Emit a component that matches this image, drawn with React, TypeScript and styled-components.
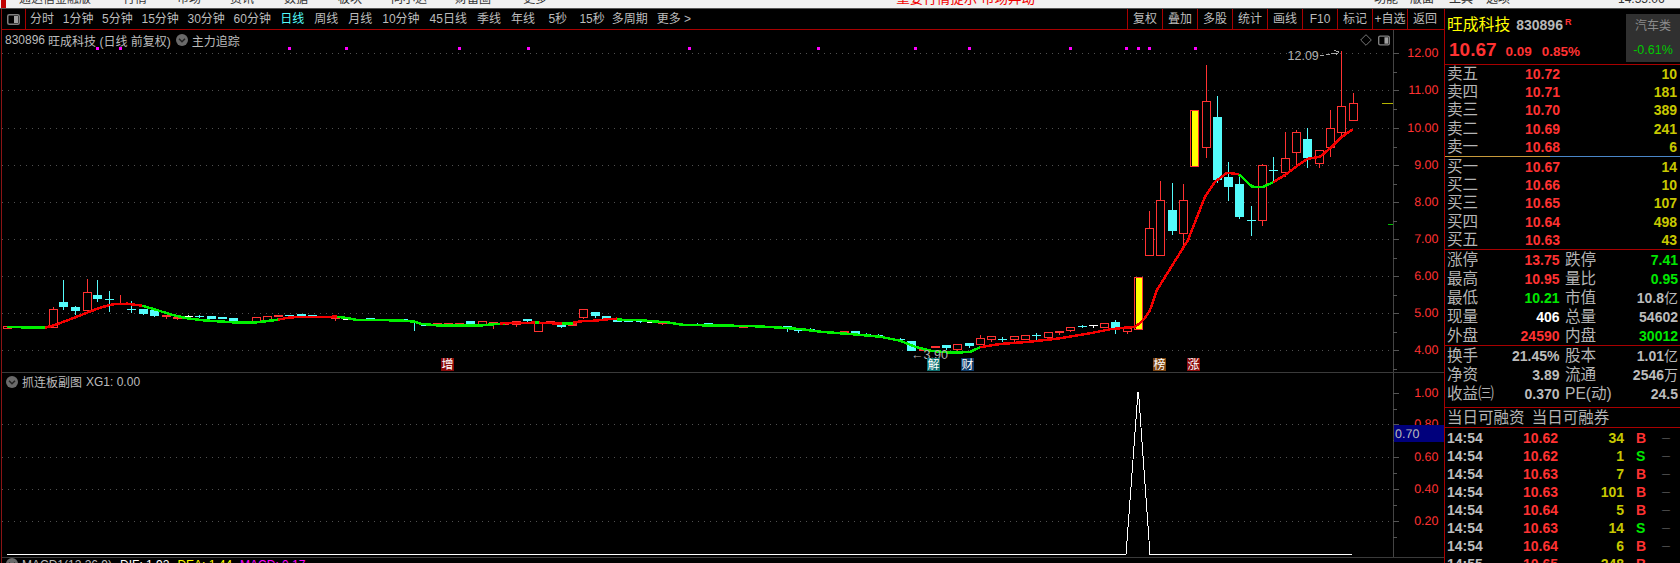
import React from "react";
import styled, { createGlobalStyle } from "styled-components";

const SANS = `"Liberation Sans", "Noto Sans CJK SC", sans-serif`;
const RED = "#ff3232";
const GREEN = "#00e800";
const GREY = "#bcbcbc";
const YELLOW = "#c8c800";
const CYAN = "#54fcfc";
const RULE = "#a80000";

const Global = createGlobalStyle`
  html, body { margin: 0; padding: 0; background: #000; }
  * { box-sizing: border-box; }
`;

const Page = styled.div`
  width: 1680px; height: 563px; overflow: hidden; background: #000;
  display: flex; flex-direction: column; font-family: ${SANS}; color: ${GREY};
`;
const MenuStrip = styled.div`
  height: 9px; flex: none; background: #f0f0f0; border-bottom: 1px solid #555;
  display: flex; align-items: flex-end; overflow: hidden; position: relative; padding-bottom: 2px;
`;
const MenuLogo = styled.span`
  width: 5px; height: 8px; background: #c00000; flex: none; margin: 0 0 -2px 1px;
`;
const MenuItem = styled.span<{ $ml: number; $red?: boolean }>`
  margin-left: ${(p) => p.$ml}px; flex: none; font-size: ${(p) => (p.$red ? 13.5 : 12)}px; line-height: 14px; white-space: nowrap;
  color: ${(p) => (p.$red ? "#f00000" : "#333")};
`;
const Body = styled.div`display: flex; height: 554px; flex: none;`;
const Main = styled.div`
  width: 1444px; padding-left: 1px; flex: none; display: flex; flex-direction: column;
`;
const MainInner = styled.div`
  border-left: 1px solid #8a1414; width: 1443px; height: 100%; display: flex; flex-direction: column;
`;
const Toolbar = styled.div`
  height: 21px; flex: none; display: flex; align-items: stretch; border-bottom: 1px solid ${RULE};
`;
const ToolIcon = styled.div`
  width: 24px; border-right: 1px solid ${RULE}; display: flex; align-items: center; justify-content: center;
`;
const Tabs = styled.div`display: flex; align-items: center; padding-left: 4px; flex: 1;`;
const TabGroup = styled.div<{ $gap: number; $ml?: number }>`
  display: flex; align-items: center; gap: ${(p) => p.$gap}px; margin-left: ${(p) => p.$ml ?? 0}px;
`;
const Tab = styled.span<{ $on?: boolean; $ml?: number }>`
  font-size: 12px; line-height: 20px; white-space: nowrap; margin-left: ${(p) => p.$ml ?? 0}px;
  color: ${(p) => (p.$on ? CYAN : GREY)};
`;
const ToolButtons = styled.div`display: flex; flex: none; padding-right: 2px;`;
const ToolButton = styled.div`
  width: 35px; border-left: 1px solid ${RULE}; font-size: 12px; line-height: 20px; text-align: center; white-space: nowrap;
`;
const PaneHeader = styled.div<{ $h: number }>`
  height: ${(p) => p.$h}px; width: 1392px; flex: none; display: flex; align-items: center;
  padding-left: 3px; border-right: 1px solid #444; font-size: 12px; color: ${GREY}; white-space: nowrap;
`;
const KlineHeader = styled(PaneHeader)`padding-top: 3px;`;
const HeaderRight = styled.div`margin-left: auto; display: flex; align-items: center; gap: 6px; padding-right: 3px;`;
const CodeText = styled.span`margin-right: 3px;`;
const ChevronWrap = styled.span`display: inline-flex; margin: 0 4px 0 5px;`;
const SubChevron = styled.span`display: inline-flex; margin: 0 4px 0 1px;`;
const Gap = styled.span`margin-left: 4px;`;
const ChartSvg = styled.svg`display: block; flex: none; overflow: visible;`;
const Rule = styled.div`height: 1px; flex: none; background: #3a3a3a;`;
const MacdRow = styled(PaneHeader)`border-right: none; width: auto; align-items: flex-start; padding-top: 0;`;
const MacdPart = styled.span<{ $c: string; $ml: number }>`color: ${(p) => p.$c}; margin-left: ${(p) => p.$ml}px;`;

const AxisLabel = styled.text`
  fill: ${RED}; font-family: ${SANS}; font-size: 12.5px; text-anchor: end; dominant-baseline: central;
`;
const ChartNote = styled.text`fill: #b0b0b0; font-family: ${SANS}; font-size: 12.5px; dominant-baseline: central;`;
const BadgeText = styled.text`
  fill: #fff; font-family: ${SANS}; font-size: 12px; text-anchor: middle; dominant-baseline: central;
`;
const BlueLabel = styled.text`fill: ${GREY}; font-family: ${SANS}; font-size: 12.5px; dominant-baseline: central;`;

const Side = styled.aside`
  width: 236px; flex: none; border-left: 1px solid ${RULE}; display: flex; flex-direction: column; overflow: hidden;
`;
const Quote = styled.div`
  height: 56px; flex: none; display: flex; border-bottom: 1px solid ${RULE};
`;
const QuoteInfo = styled.div`flex: 1; padding-left: 2px; display: flex; flex-direction: column;`;
const NameRow = styled.div`display: flex; align-items: center; height: 24px; margin-top: 4px;`;
const StockName = styled.span`color: #ffff00; font-size: 15.8px; line-height: 24px;`;
const StockCode = styled.span`font-weight: 700; font-size: 14px; margin-left: 6px; color: #b8b8b8;`;
const StockFlag = styled.span`color: ${RED}; font-weight: 700; font-size: 9px; margin: -6px 0 0 2px;`;
const PriceRow = styled.div`display: flex; align-items: baseline; height: 26px;`;
const LastPrice = styled.span`color: ${RED}; font-weight: 700; font-size: 19px; line-height: 26px; margin-left: 2px;`;
const Change = styled.span<{ $ml: number }>`color: ${RED}; font-weight: 700; font-size: 13.5px; margin-left: ${(p) => p.$ml}px;`;
const Sector = styled.div`
  width: 54px; height: 48px; margin-top: 5px; background: #303030; display: flex; flex-direction: column;
  align-items: center; flex: none;
`;
const SectorName = styled.span`color: #8c8c8c; font-size: 12px; line-height: 14px; margin-top: 5px;`;
const SectorChange = styled.span`color: #00c800; font-size: 12.5px; line-height: 14px; margin-top: 10px;`;

const Book = styled.div`flex: none;`;
const BidBook = styled(Book)`padding-top: 1px; border-bottom: 1px solid ${RULE}; height: 93px;`;
const AskBook = styled(Book)`height: 91px;`;
const Split = styled.div`
  height: 1px; flex: none; background: linear-gradient(90deg, #c89a3c 0 105px, #4a86c8 105px 100%);
`;
const BookRow = styled.div`
  height: 18.2px; display: grid; grid-template-columns: 78px 35px 1fr; padding: 0 3px 0 2px; align-items: center;
`;
const Label = styled.span`font-size: 15.6px; line-height: 18px; color: #b4b4b4; white-space: nowrap;`;
const Num = styled.span<{ $c: string; $right?: boolean }>`
  font-weight: 700; font-size: 14px; line-height: 18px; color: ${(p) => p.$c}; white-space: nowrap;
  text-align: ${(p) => (p.$right ? "right" : "left")};
`;
const StatsBlock = styled.div<{ $pb?: number }>`
  flex: none; border-bottom: 1px solid ${RULE}; padding: 0 0 ${(p) => p.$pb ?? 0}px 2px;
`;
const StatRow = styled.div<{ $h: number }>`height: ${(p) => p.$h}px; display: flex;`;
const Stat = styled.div<{ $w: number; $mr?: number }>`
  width: ${(p) => p.$w}px; margin-right: ${(p) => p.$mr ?? 0}px; display: flex; justify-content: space-between; align-items: center;
`;
const Unit = styled.span`font-weight: 400;`;
const Margin = styled.div`
  height: 20px; flex: none; border-bottom: 1px solid ${RULE}; padding-left: 2px; font-size: 15.5px; line-height: 19px;
  color: #b4b4b4; word-spacing: 3px; white-space: nowrap;
`;
const Ticks = styled.div`padding-top: 1px; flex: none;`;
const TickRow = styled.div`
  height: 18px; display: grid; grid-template-columns: 76px 35px 66px 38px 1fr; padding-left: 2px; align-items: center;
`;
const TickSide = styled(Num)`padding-left: 12px;`;
const TickDash = styled.span`font-size: 8px; color: #808080; line-height: 18px;`;

/* chart data: x, body top, body bottom, high, low, kind */
type Kind = "r" | "R" | "c" | "x" | "w" | "y";
type Candle = [number, number, number, number | null, number | null, Kind];
const candles: Candle[] = [
  [7, 326, 328, null, null, "r"], [18, 327, 328, null, null, "R"], [41, 326, 328, null, null, "R"],
  [53, 309, 327, 307, null, "r"], [63, 302, 307, 280, 310, "c"], [75, 307, 311, 306, 315, "c"],
  [87, 292, 310, 279, null, "r"], [97, 295, 299, 280, 302, "c"], [109, 299, 299, 291, 312, "x"],
  [120, 303, 304, 295, null, "R"], [131, 309, 309, 301, 313, "x"], [143, 309, 314, null, 315, "c"],
  [154, 310, 316, null, 317, "c"], [166, 315, 317, null, 319, "R"], [177, 317, 319, null, 320, "R"],
  [188, 316, 316, 315, 318, "w"], [199, 316, 316, 315, 318, "x"], [211, 316, 319, null, null, "c"],
  [222, 317, 319, null, null, "c"], [233, 318, 321, null, null, "c"], [245, 321, 322, null, null, "R"],
  [256, 317, 322, null, null, "r"], [267, 316, 320, null, null, "r"], [278, 315, 317, null, null, "R"],
  [289, 315, 316, null, null, "c"], [301, 314, 316, null, null, "c"], [312, 315, 316, null, null, "c"],
  [335, 318, 319, null, 321, "R"], [347, 319, 319, null, null, "w"],
  [370, 318, 319, null, null, "c"], [392, 319, 320, null, null, "c"], [403, 319, 321, null, null, "c"],
  [414, 322, 323, null, 331, "c"], [425, 325, 326, null, null, "c"], [437, 323, 325, null, null, "r"],
  [448, 323, 325, null, null, "r"], [459, 323, 325, null, null, "R"], [470, 321, 324, null, 325, "c"],
  [482, 321, 324, null, null, "r"], [493, 322, 325, null, 329, "R"], [504, 322, 325, null, null, "R"],
  [516, 321, 325, null, 327, "R"], [527, 319, 321, null, 322, "c"], [538, 322, 331, null, null, "r"],
  [550, 321, 324, null, null, "R"], [561, 322, 327, null, 328, "c"], [572, 322, 326, null, null, "R"],
  [583, 309, 317, null, 319, "r"], [595, 312, 316, null, 318, "c"], [606, 316, 319, null, null, "c"],
  [617, 319, 322, null, null, "c"], [628, 321, 322, null, null, "c"], [640, 321, 322, null, 323, "c"],
  [651, 322, 323, null, null, "w"], [662, 323, 324, null, 325, "R"], [697, 324, 325, 323, null, "c"],
  [708, 323, 325, null, null, "c"], [719, 324, 325, null, null, "c"], [743, 327, 328, null, null, "R"],
  [755, 325, 326, null, null, "w"], [787, 326, 329, null, 332, "c"], [798, 330, 330, 328, 333, "x"],
  [810, 329, 331, 328, null, "c"], [832, 332, 333, null, null, "c"], [844, 331, 333, null, null, "R"],
  [855, 331, 334, null, null, "c"], [866, 334, 335, 333, null, "c"], [878, 335, 337, 334, null, "c"],
  [900, 339, 339, 338, 341, "x"], [911, 341, 351, null, null, "c"], [923, 349, 351, null, null, "R"],
  [935, 346, 348, null, null, "R"], [946, 345, 348, null, 350, "c"], [957, 344, 349, null, 352, "r"],
  [969, 343, 346, null, 348, "c"], [980, 338, 344, 335, null, "r"], [991, 336, 339, null, 342, "r"],
  [1002, 339, 339, 337, 342, "x"], [1014, 336, 339, null, 342, "r"], [1025, 335, 339, null, null, "r"],
  [1036, 335, 335, 333, 340, "x"], [1048, 332, 337, null, null, "r"], [1059, 331, 333, null, 335, "R"],
  [1070, 327, 330, null, 332, "r"], [1082, 326, 326, 325, 328, "x"], [1093, 325, 325, null, 328, "w"],
  [1104, 323, 327, null, null, "r"], [1115, 322, 328, 320, 334, "c"], [1127, 328, 331, null, 334, "r"],
  [1138, 277, 329, null, null, "y"], [1149, 228, 255, 211, null, "r"], [1160, 200, 255, 181, null, "r"],
  [1172, 210, 231, 183, 235, "c"], [1183, 200, 233, 184, 245, "r"], [1194, 110, 166, null, 167, "y"],
  [1206, 101, 147, 65, 158, "r"], [1217, 117, 180, 96, 183, "c"], [1228, 177, 187, 162, 201, "c"],
  [1239, 184, 217, 175, 219, "c"], [1251, 220, 220, 206, 236, "x"], [1262, 165, 220, 164, 226, "r"],
  [1273, 170, 170, 157, 182, "x"], [1285, 158, 172, 132, 177, "r"], [1296, 132, 152, 130, 167, "r"],
  [1307, 139, 158, 128, 168, "c"], [1319, 150, 163, null, 168, "r"], [1330, 128, 147, 110, 157, "r"],
  [1341, 106, 132, 51, 138, "r"], [1353, 103, 120, 93, null, "r"],
];

type Seg = [string, number[][]];
const LG = "#00f000";
const LR = "#f40000";
const maSegments: Seg[] = [
  [LG, [[7, 327], [45, 327.7]]],
  [LR, [[45, 327.7], [55, 325], [70, 319.3], [83, 314.3], [100, 307.7], [113, 304.3], [127, 303.7], [142, 305.7]]],
  [LG, [[142, 305.7], [157, 310], [170, 314.3], [187, 318.3], [203, 320.3], [233, 322.3], [257, 322.3], [278, 319.7]]],
  [LR, [[278, 319.7], [290, 317.3], [337, 316.7]]],
  [LG, [[337, 316.7], [350, 318.5], [357, 320], [380, 320], [403, 320.7], [415, 321.7], [420, 323.7], [437, 325.3], [482, 325.3], [493, 324.3], [505, 323.7]]],
  [LR, [[500, 323.3], [535, 322.7]]],
  [LG, [[535, 322.7], [539, 322.7]]],
  [LR, [[539, 322.7], [562, 323.7]]],
  [LG, [[562, 323.7], [573, 323.7]]],
  [LR, [[573, 322.7], [583, 321], [595, 320.7], [607, 319.3], [617, 318.7]]],
  [LG, [[617, 319.7], [640, 320], [652, 321.3], [668, 322.3], [675, 323.7], [685, 325], [750, 326], [775, 327.3], [800, 329], [820, 331.7], [850, 334], [880, 336.7], [900, 340.7], [915, 346.7], [930, 350.7], [950, 352.7], [970, 352], [980, 347.3]]],
  [LR, [[980, 347.3], [1000, 344], [1030, 341.7], [1060, 338.3], [1090, 333.3], [1110, 329.3], [1125, 327.7], [1135, 326.7], [1140, 323], [1145, 318], [1150, 310], [1157, 290], [1165, 277], [1188, 240], [1205, 196.7], [1215, 181.7], [1227, 172.7], [1239, 174.3]]],
  [LG, [[1239, 174.3], [1252, 186.7], [1263, 187], [1273, 182.3]]],
  [LR, [[1273, 182.3], [1285, 175], [1297, 166], [1307, 159], [1320, 156.7], [1330, 148.3], [1342, 136.7], [1353, 129.3]]],
];

const priceLevels = [12, 11, 10, 9, 8, 7, 6, 5, 4];
const levelY = (p: number) => Math.round(53.3 + (12 - p) * 37.12);
const purple = [96, 119, 288, 345, 458, 527, 688, 817, 914, 968, 1069, 1125, 1137, 1148, 1194];
const badges: [number, string, string][] = [
  [441, "增", "#8a0a0a"], [927, "解", "#0c7272"], [961, "财", "#0c3a68"], [1153, "榜", "#7c4410"], [1187, "涨", "#8a0a0a"],
];
const subLevels: [number, string][] = [[393, "1.00"], [424, "0.80"], [457, "0.60"], [489, "0.40"], [521, "0.20"]];

const CandleMark = ({ c }: { c: Candle }) => {
  const [x, top, bottom, high, low, kind] = c;
  const colour = kind === "c" || kind === "x" ? CYAN : kind === "w" ? "#fff" : RED;
  const wx = x + 0.5;
  const wick = (a: number, b: number) => <line x1={wx} x2={wx} y1={a} y2={b} stroke={colour} />;
  return (
    <g>
      {high !== null && wick(high, top)}
      {low !== null && wick(bottom, low)}
      {kind === "r" && <rect x={x - 4 + 0.5} y={top + 0.5} width={8} height={bottom - top} fill="#000" stroke={RED} />}
      {kind === "R" && <rect x={x - 4} y={top} width={9} height={Math.max(bottom - top, 1)} fill={RED} />}
      {kind === "c" && <rect x={x - 4} y={top} width={9} height={Math.max(bottom - top, 1)} fill={CYAN} />}
      {(kind === "x" || kind === "w") && <rect x={x - 4} y={top} width={9} height={1} fill={colour} />}
      {kind === "y" && (
        <>
          <rect x={x - 4 + 0.5} y={top + 0.5} width={8} height={bottom - top} fill="#000" stroke={RED} />
          <rect x={x - 2} y={top + 1} width={6} height={bottom - top - 1} fill="#ffff00" />
        </>
      )}
    </g>
  );
};

const CircleChevron = () => (
  <svg width="12" height="12" viewBox="0 0 12 12">
    <circle cx="6" cy="6" r="6" fill="#6a6a6a" />
    <path d="M3 4.8 6 7.8 9 4.8" fill="none" stroke="#222" strokeWidth="1.5" />
  </svg>
);
const PanelGlyph = ({ w, h }: { w: number; h: number }) => (
  <svg width={w} height={h} viewBox="0 0 13 11">
    <rect x="0.75" y="0.75" width="11.5" height="9.5" rx="1.5" fill="none" stroke="#808080" strokeWidth="1.5" />
    <rect x="7" y="2" width="4" height="7" fill="#a0a0a0" />
  </svg>
);

const Kline = () => (
  <ChartSvg width={1442} height={325} viewBox="2 47 1442 325" shapeRendering="crispEdges">
    {priceLevels.map((p) => (
      <line key={p} x1={2} x2={1393} y1={levelY(p) + 0.5} y2={levelY(p) + 0.5} stroke="#505050" strokeDasharray="1 5" />
    ))}
    <line x1={1393.5} x2={1393.5} y1={47} y2={372} stroke="#444" />
    {priceLevels.map((p) => (
      <g key={p}>
        <line x1={1393} x2={1399} y1={levelY(p) + 0.5} y2={levelY(p) + 0.5} stroke="#555" />
        <line x1={1393} x2={1397} y1={levelY(p) + 19} y2={levelY(p) + 19} stroke="#555" />
        <AxisLabel x={1438.5} y={levelY(p)} textRendering="geometricPrecision">{p.toFixed(2)}</AxisLabel>
      </g>
    ))}
    <line x1={1382} x2={1393} y1={103.5} y2={103.5} stroke="#b4b400" />
    <line x1={1388} x2={1393} y1={224.5} y2={224.5} stroke="#00c000" />
    {purple.map((x) => <rect key={x} x={x} y={47} width={3} height={3} fill="#ff00ff" />)}
    {candles.map((c) => <CandleMark key={c[0]} c={c} />)}
    {maSegments.map(([col, pts], i) => (
      <polyline key={i} points={pts.map((p) => p.join(",")).join(" ")} fill="none" stroke={col} strokeWidth={2.5} />
    ))}
    <ChartNote x={1287.5} y={55.5}>12.09</ChartNote>
    <path d="M1320 55.5h4M1326 54.5h4M1331 53.5h7M1334 50.5l5 1.5-3 3" fill="none" stroke="#a8a8a8" />
    <ChartNote x={911} y={355}>←3.90</ChartNote>
    {badges.map(([x, t, col]) => (
      <g key={t}>
        <rect x={x} y={358} width={13} height={13} fill={col} />
        <BadgeText x={x + 6.5} y={364.5}>{t}</BadgeText>
      </g>
    ))}
  </ChartSvg>
);

const SubChart = () => (
  <ChartSvg width={1442} height={167} viewBox="2 390 1442 167" shapeRendering="crispEdges">
    {subLevels.slice(1).map(([y]) => (
      <line key={y} x1={2} x2={1393} y1={y + 0.5} y2={y + 0.5} stroke="#505050" strokeDasharray="1 5" />
    ))}
    <line x1={1393.5} x2={1393.5} y1={390} y2={557} stroke="#444" />
    {subLevels.map(([y, t]) => (
      <g key={t}>
        <line x1={1393} x2={1399} y1={y + 0.5} y2={y + 0.5} stroke="#555" />
        <line x1={1393} x2={1397} y1={y + 16.5} y2={y + 16.5} stroke="#555" />
        <AxisLabel x={1438.5} y={y} textRendering="geometricPrecision">{t}</AxisLabel>
      </g>
    ))}
    <rect x={1394} y={425} width={50} height={17} fill="#00007c" />
    <BlueLabel x={1395} y={433.5} textRendering="geometricPrecision">0.70</BlueLabel>
    <polyline points="7,554.5 1126,554.5 1138,392 1138.5,392 1150,554.5 1352,554.5" fill="none" stroke="#fff" />
  </ChartSvg>
);

const intradayTabs = ["分时", "1分钟", "5分钟", "15分钟", "30分钟", "60分钟"];
const periodTabs = ["日线", "周线", "月线", "10分钟", "45日线", "季线", "年线"];
const tools = ["复权", "叠加", "多股", "统计", "画线", "F10", "标记", "+自选", "返回"];
const asks: [string, string, string][] = [["卖五", "10.72", "10"], ["卖四", "10.71", "181"], ["卖三", "10.70", "389"], ["卖二", "10.69", "241"], ["卖一", "10.68", "6"]];
const bids: [string, string, string][] = [["买一", "10.67", "14"], ["买二", "10.66", "10"], ["买三", "10.65", "107"], ["买四", "10.64", "498"], ["买五", "10.63", "43"]];
const WHITE = "#ffffff";
const stats: [string, string, string, string, string, string, string?][] = [
  ["涨停", "13.75", RED, "跌停", "7.41", GREEN],
  ["最高", "10.95", RED, "量比", "0.95", GREEN],
  ["最低", "10.21", GREEN, "市值", "10.8", GREY, "亿"],
  ["现量", "406", WHITE, "总量", "54602", GREY],
  ["外盘", "24590", RED, "内盘", "30012", GREEN],
];
const fundamentals: [string, string, string, string, string][] = [
  ["换手", "21.45%", "股本", "1.01", "亿"],
  ["净资", "3.89", "流通", "2546", "万"],
  ["收益㈢", "0.370", "PE(动)", "24.5", ""],
];
const ticks: [string, string, string, string][] = [
  ["14:54", "10.62", "34", "B"], ["14:54", "10.62", "1", "S"], ["14:54", "10.63", "7", "B"], ["14:54", "10.63", "101", "B"],
  ["14:54", "10.64", "5", "B"], ["14:54", "10.63", "14", "S"], ["14:54", "10.64", "6", "B"], ["14:55", "10.65", "248", "B"],
];

const BookRows = ({ rows }: { rows: [string, string, string][] }) => (
  <>
    {rows.map(([l, p, v]) => (
      <BookRow key={l}>
        <Label>{l}</Label>
        <Num $c={RED}>{p}</Num>
        <Num $c={YELLOW} $right>{v}</Num>
      </BookRow>
    ))}
  </>
);

export default function App() {
  return (
    <Page>
      <Global />
      <MenuStrip>
        <MenuLogo />
        <MenuItem $ml={13}>通达信金融版</MenuItem>
        <MenuItem $ml={32}>行情</MenuItem>
        <MenuItem $ml={30}>市场</MenuItem>
        <MenuItem $ml={29}>资讯</MenuItem>
        <MenuItem $ml={30}>数据</MenuItem>
        <MenuItem $ml={30}>板块</MenuItem>
        <MenuItem $ml={29}>问小达</MenuItem>
        <MenuItem $ml={28}>财富圈</MenuItem>
        <MenuItem $ml={32}>更多</MenuItem>
        <MenuItem $ml={349} $red>重要行情提示 市场异动</MenuItem>
        <MenuItem $ml={339}>功能</MenuItem>
        <MenuItem $ml={12}>版面</MenuItem>
        <MenuItem $ml={15}>工具</MenuItem>
        <MenuItem $ml={13}>选项</MenuItem>
        <MenuItem $ml={108}>14:55:06</MenuItem>
      </MenuStrip>
      <Body>
        <Main>
          <MainInner>
            <Toolbar>
              <ToolIcon><PanelGlyph w={13} h={11} /></ToolIcon>
              <Tabs>
                <TabGroup $gap={8.7}>
                  {intradayTabs.map((t) => <Tab key={t}>{t}</Tab>)}
                </TabGroup>
                <TabGroup $gap={10} $ml={9.3}>
                  {periodTabs.map((t) => <Tab key={t} $on={t === "日线"}>{t}</Tab>)}
                </TabGroup>
                <Tab $ml={13.4}>5秒</Tab>
                <Tab $ml={12.3}>15秒</Tab>
                <Tab $ml={7}>多周期</Tab>
                <Tab $ml={9}>更多 &gt;</Tab>
              </Tabs>
              <ToolButtons>
                {tools.map((t) => <ToolButton key={t}>{t}</ToolButton>)}
              </ToolButtons>
            </Toolbar>
            <KlineHeader $h={17}>
              <CodeText>830896</CodeText>旺成科技 (日线 前复权)
              <ChevronWrap><CircleChevron /></ChevronWrap>主力追踪
              <HeaderRight>
                <svg width="12" height="12" viewBox="0 0 12 12">
                  <path d="M6 .7 11.3 6 6 11.3.7 6Z" fill="none" stroke="#777" />
                </svg>
                <PanelGlyph w={12} h={11} />
              </HeaderRight>
            </KlineHeader>
            <Kline />
            <Rule />
            <PaneHeader $h={17}>
              <SubChevron><CircleChevron /></SubChevron>抓连板副图<Gap>XG1: 0.00</Gap>
            </PaneHeader>
            <SubChart />
            <Rule />
            <MacdRow $h={18}>
              <SubChevron><CircleChevron /></SubChevron>MACD1(12,26,9)
              <MacdPart $c="#fff" $ml={8}>DIF: 1.92</MacdPart>
              <MacdPart $c="#ffff00" $ml={8}>DEA: 1.44</MacdPart>
              <MacdPart $c="#ff00ff" $ml={8}>MACD: 0.17</MacdPart>
            </MacdRow>
          </MainInner>
        </Main>
        <Side>
          <Quote>
            <QuoteInfo>
              <NameRow>
                <StockName>旺成科技</StockName>
                <StockCode>830896</StockCode>
                <StockFlag>R</StockFlag>
              </NameRow>
              <PriceRow>
                <LastPrice>10.67</LastPrice>
                <Change $ml={9}>0.09</Change>
                <Change $ml={10}>0.85%</Change>
              </PriceRow>
            </QuoteInfo>
            <Sector>
              <SectorName>汽车类</SectorName>
              <SectorChange>-0.61%</SectorChange>
            </Sector>
          </Quote>
          <AskBook><BookRows rows={asks} /></AskBook>
          <Split />
          <BidBook><BookRows rows={bids} /></BidBook>
          <StatsBlock>
            {stats.map(([a, b, c, d, e, f, u]) => (
              <StatRow key={a} $h={19}>
                <Stat $w={112.5} $mr={5.5}><Label>{a}</Label><Num $c={c} $right>{b}</Num></Stat>
                <Stat $w={113}><Label>{d}</Label><Num $c={f} $right>{e}{u && <Unit>{u}</Unit>}</Num></Stat>
              </StatRow>
            ))}
          </StatsBlock>
          <StatsBlock $pb={3}>
            {fundamentals.map(([a, b, c, d, u]) => (
              <StatRow key={a} $h={19.2}>
                <Stat $w={112.5} $mr={5.5}><Label>{a}</Label><Num $c={GREY} $right>{b}</Num></Stat>
                <Stat $w={113}><Label>{c}</Label><Num $c={GREY} $right>{d}{u && <Unit>{u}</Unit>}</Num></Stat>
              </StatRow>
            ))}
          </StatsBlock>
          <Margin>当日可融资 当日可融券</Margin>
          <Ticks>
            {ticks.map(([t, p, v, s], i) => (
              <TickRow key={i}>
                <Num $c={GREY}>{t}</Num>
                <Num $c={RED}>{p}</Num>
                <Num $c={YELLOW} $right>{v}</Num>
                <TickSide $c={s === "B" ? RED : GREEN}>{s}</TickSide>
                <TickDash>—</TickDash>
              </TickRow>
            ))}
          </Ticks>
        </Side>
      </Body>
    </Page>
  );
}
